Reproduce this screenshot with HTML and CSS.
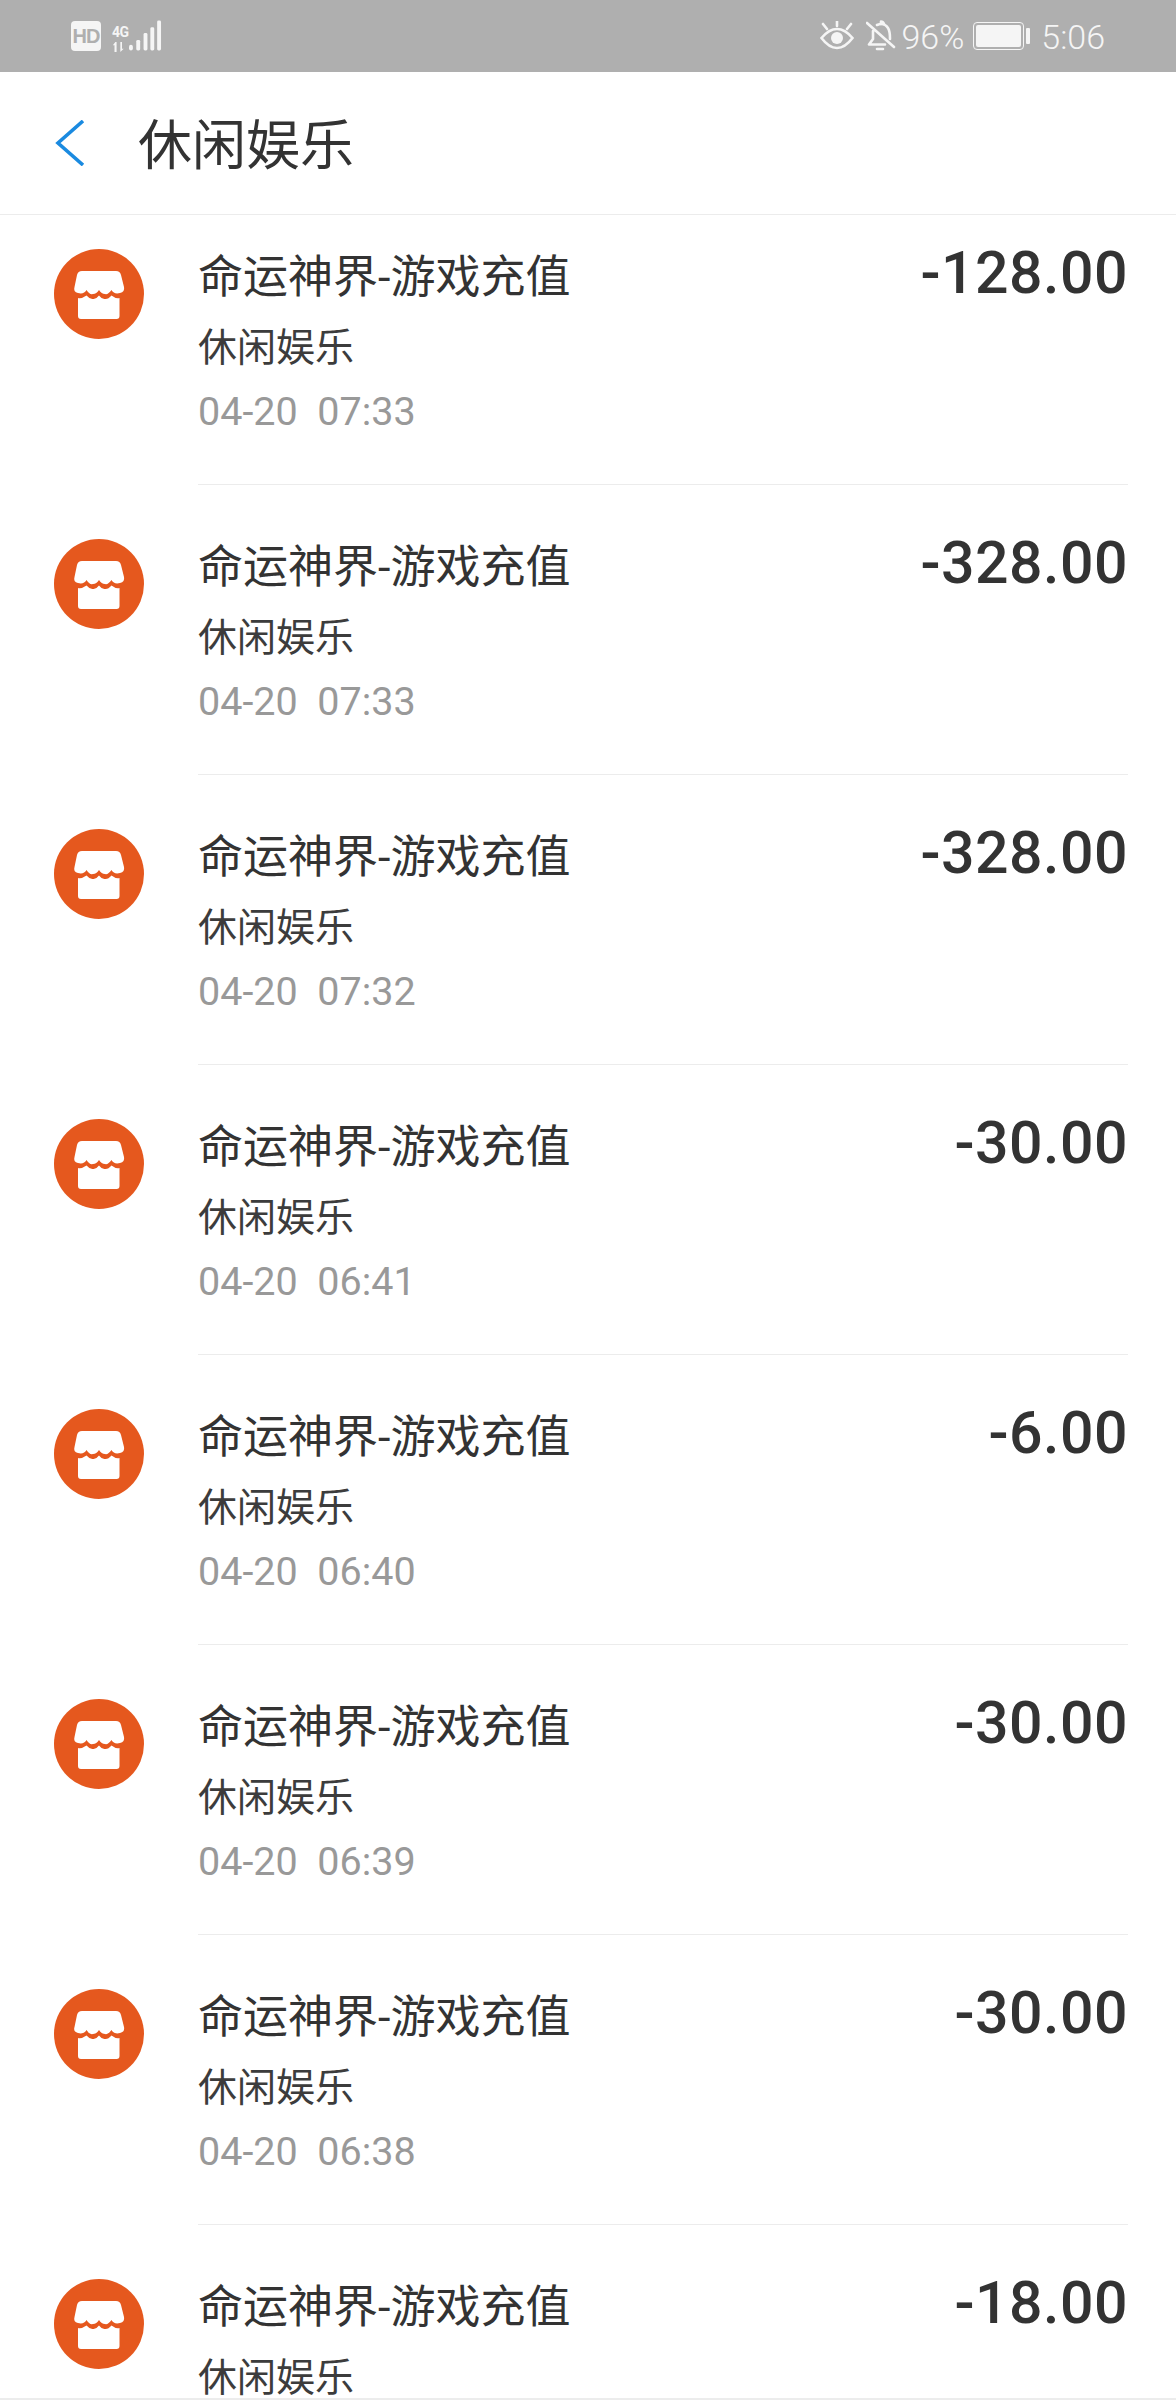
FILE: index.html
```html
<!DOCTYPE html>
<html lang="zh-CN">
<head>
<meta charset="utf-8">
<title>休闲娱乐</title>
<link rel="stylesheet" href="styles.css">
</head>
<body>
<svg class="defs" width="0" height="0" aria-hidden="true">
  <symbol id="store" viewBox="0 0 90 90">
    <circle cx="45" cy="45" r="45" fill="#e5581e"/>
    <path fill="#fff" d="M28 22H62Q66 22 67 26L70 38Q71 43 66 44Q60 45.500 57.500 41Q54 46 51 45Q47.500 45 45 41Q42.500 45 39 45Q35.500 46 32.500 41Q30 45.500 24 44Q19 43 20.500 38L23 26Q24 22 28 22Z"/>
    <path fill="#fff" d="M24 49Q27.500 50 32.500 46.500Q36 50.500 39 50Q42 50.500 45 46.500Q48 50.500 51 50Q54 50.500 57.500 46.500Q62 50 65.500 49V67Q65.500 70 62.500 70H27Q24 70 24 67Z"/>
  </symbol>
</svg>
<div class="app">
  <div class="status">
    <div class="status-left">
      <span class="hd">HD</span>
      <div class="net">
        <div class="net-labels">
          <span class="net-g">4G</span>
          <svg class="net-arrows" viewBox="0 0 16 12"><path fill="#f5f5f5" d="M3 0 0 4H2V12H4.500V0ZM9 0V12L13 8H11V0Z"/></svg>
        </div>
        <svg class="signal" viewBox="0 0 34 32"><g fill="#f5f5f5"><rect x="0" y="25" width="4" height="6" rx="2"/><rect x="7.500" y="20" width="4" height="11" rx="1.500"/><rect x="15" y="13" width="4" height="18" rx="1.500"/><rect x="22" y="7" width="4" height="24" rx="1.500"/><rect x="29" y="0" width="4" height="31" rx="1.500"/></g></svg>
      </div>
    </div>
    <div class="status-right">
      <svg class="eye" viewBox="0 0 34 30" fill="none" stroke="#f5f5f5" stroke-width="2.600" stroke-linecap="round"><path d="M1.500 17Q9 8 17 8T32.500 17Q25 27 17 27T1.500 17Z"/><circle cx="17" cy="17" r="6" fill="#f5f5f5" stroke="none"/><path d="M3 3 7 8M17 0V5M31 3 27 8"/></svg>
      <svg class="bell" viewBox="0 0 30 32" fill="none" stroke="#f5f5f5" stroke-width="2.600" stroke-linecap="round" stroke-linejoin="round"><path d="M7 11V19L3 24.500H19M11 5Q18 2 22 8Q24 11 24 19M1 3 28 27"/><path d="M15 4V1.500Q17 1.500 18 4M11 29H17"/></svg>
      <span class="pct">96%</span>
      <div class="battery"><div class="battery-shell"><div class="battery-fill"></div></div><div class="battery-nub"></div></div>
      <span class="clock">5:06</span>
    </div>
  </div>
  <header class="bar">
    <svg class="back" viewBox="0 0 30 46" fill="none" stroke="#1a8ae0" stroke-width="3.600"><path d="M28 1 3 23 28 45"/></svg>
    <h1 class="bar-title">休闲娱乐</h1>
  </header>
  <main class="list">
    <div class="row">
      <svg class="icon"><use href="#store"/></svg>
      <div class="body"><div class="info"><div class="name">命运神界-游戏充值</div><div class="cat">休闲娱乐</div><div class="time">04-20&nbsp;&nbsp;07:33</div></div><div class="amount">-128.00</div></div>
    </div>
    <div class="row">
      <svg class="icon"><use href="#store"/></svg>
      <div class="body"><div class="info"><div class="name">命运神界-游戏充值</div><div class="cat">休闲娱乐</div><div class="time">04-20&nbsp;&nbsp;07:33</div></div><div class="amount">-328.00</div></div>
    </div>
    <div class="row">
      <svg class="icon"><use href="#store"/></svg>
      <div class="body"><div class="info"><div class="name">命运神界-游戏充值</div><div class="cat">休闲娱乐</div><div class="time">04-20&nbsp;&nbsp;07:32</div></div><div class="amount">-328.00</div></div>
    </div>
    <div class="row">
      <svg class="icon"><use href="#store"/></svg>
      <div class="body"><div class="info"><div class="name">命运神界-游戏充值</div><div class="cat">休闲娱乐</div><div class="time">04-20&nbsp;&nbsp;06:41</div></div><div class="amount">-30.00</div></div>
    </div>
    <div class="row">
      <svg class="icon"><use href="#store"/></svg>
      <div class="body"><div class="info"><div class="name">命运神界-游戏充值</div><div class="cat">休闲娱乐</div><div class="time">04-20&nbsp;&nbsp;06:40</div></div><div class="amount">-6.00</div></div>
    </div>
    <div class="row">
      <svg class="icon"><use href="#store"/></svg>
      <div class="body"><div class="info"><div class="name">命运神界-游戏充值</div><div class="cat">休闲娱乐</div><div class="time">04-20&nbsp;&nbsp;06:39</div></div><div class="amount">-30.00</div></div>
    </div>
    <div class="row">
      <svg class="icon"><use href="#store"/></svg>
      <div class="body"><div class="info"><div class="name">命运神界-游戏充值</div><div class="cat">休闲娱乐</div><div class="time">04-20&nbsp;&nbsp;06:38</div></div><div class="amount">-30.00</div></div>
    </div>
    <div class="row">
      <svg class="icon"><use href="#store"/></svg>
      <div class="body"><div class="info"><div class="name">命运神界-游戏充值</div><div class="cat">休闲娱乐</div><div class="time">04-20&nbsp;&nbsp;06:37</div></div><div class="amount">-18.00</div></div>
    </div>
  </main>
</div>
</body>
</html>
```
FILE: styles.css
```css
* { box-sizing: border-box; }
html, body { margin: 0; padding: 0; background: #fff; }
body { font-family: Roboto, "Noto Sans CJK SC", sans-serif; color: #333; }
.defs { display: block; height: 0; }
.app { height: 2400px; overflow: hidden; display: flex; flex-direction: column; border-bottom: 2px solid #ececec; }

.status { flex: none; height: 72px; background: #afafaf; color: #f5f5f5; display: flex; justify-content: space-between; align-items: center; padding: 0 71px; }
.status-left { display: flex; align-items: center; gap: 11px; }
.hd { width: 30px; height: 30px; border-radius: 4px; background: #f5f5f5; color: #afafaf; font: 700 20px/30px "Liberation Sans", sans-serif; letter-spacing: -1px; text-align: center; }
.net { display: flex; align-items: flex-end; gap: 0; }
.net-labels { display: flex; flex-direction: column; width: 17px; gap: 3px; }
.net-g { font: 700 14px/14px Roboto, sans-serif; letter-spacing: -0.5px; }
.net-arrows { display: block; width: 15px; height: 10px; }
.signal { display: block; width: 33px; height: 32px; }
.status-right { display: flex; align-items: center; }
.eye { width: 34px; height: 30px; margin-right: 12px; margin-top: -1px; }
.bell { width: 30px; height: 32px; margin-right: 5px; }
.pct, .clock { font: 300 34px/40px Roboto, sans-serif; position: relative; top: 1px; }
.pct { margin-right: 9px; }
.battery { display: flex; align-items: center; gap: 2px; margin-right: 11px; }
.battery-shell { width: 51px; height: 28px; border: 1.500px solid #f5f5f5; border-radius: 4px; padding: 2px; }
.battery-fill { height: 100%; background: #f5f5f5; border-radius: 2px; }
.battery-nub { width: 4px; height: 16px; background: #f5f5f5; border-radius: 1px; }

.bar { flex: none; height: 143px; background: #fff; border-bottom: 1px solid #ececec; display: flex; align-items: center; padding-left: 55px; }
.back { width: 30px; height: 46px; margin-right: 53px; margin-top: -1px; }
.bar-title { margin: 0; font: 400 54px/60px "Noto Sans CJK SC", sans-serif; color: #333; margin-top: -2px; }

.list { flex: 1; min-height: 0; }
.row { display: flex; height: 290px; padding-left: 54px; padding-right: 48px; }
.row:first-child { height: 270px; }
.icon { flex: none; width: 90px; height: 90px; margin-top: 54px; margin-right: 54px; }
.row:first-child .icon { margin-top: 34px; }
.body { flex: 1; display: flex; justify-content: space-between; padding-top: 53px; border-bottom: 1px solid #ececec; }
.row:first-child .body { padding-top: 33px; }
.name { font: 400 45px/60px Roboto, "Noto Sans CJK SC", sans-serif; color: #333; }
.cat { font: 400 39px/46px "Noto Sans CJK SC", sans-serif; color: #3c3c3c; margin-top: 13px; }
.time { font: 400 39.500px/46px Roboto, sans-serif; color: #999; margin-top: 22px; }
.amount { font: 500 59px/60px Roboto, sans-serif; letter-spacing: 0.500px; color: #333; margin-top: -5px; }
```
